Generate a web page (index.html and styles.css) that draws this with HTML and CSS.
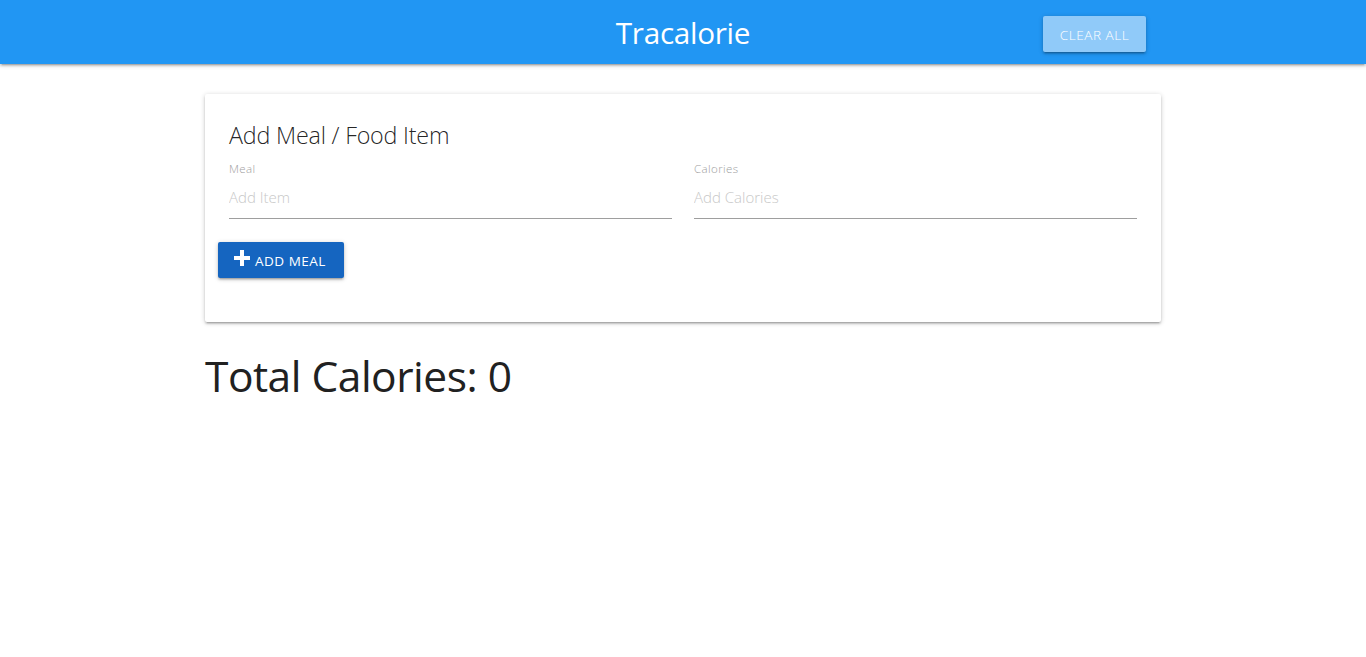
FILE: index.html
```html
<!DOCTYPE html>
<html>
<head>
<meta charset="utf-8">
<title>Tracalorie</title>
<link rel="stylesheet" href="styles.css">
</head>
<body>
<nav class="nav">
  <div class="nav-inner">
    <span class="brand">Tracalorie</span>
    <button class="btn btn-clear">CLEAR ALL</button>
  </div>
</nav>
<main class="container">
  <section class="card">
    <div class="card-content">
      <span class="card-title">Add Meal / Food Item</span>
      <form class="form">
        <div class="row">
          <div class="input-field">
            <label class="label">Meal</label>
            <input class="input" type="text" placeholder="Add Item">
          </div>
          <div class="input-field">
            <label class="label">Calories</label>
            <input class="input" type="text" placeholder="Add Calories">
          </div>
        </div>
        <button type="button" class="btn btn-add">
          <svg class="plus" viewBox="0 0 16 16" width="16" height="16"><path d="M6 0h4v6h6v4h-6v6H6v-6H0V6h6z" fill="#fff"/></svg>
          <span>ADD MEAL</span>
        </button>
      </form>
    </div>
  </section>
  <h3 class="total">Total Calories: <span>0</span></h3>
</main>
</body>
</html>
```
FILE: styles.css
```css
* { box-sizing: border-box; }
html, body { margin: 0; padding: 0; background: #fff; }
body { font-family: "Open Sans", "Noto Sans", sans-serif; color: rgba(0,0,0,0.87); }

.nav {
  height: 64px;
  background: #2196f3;
  box-shadow: 0 2px 2px 0 rgba(0,0,0,.14), 0 3px 1px -2px rgba(0,0,0,.12), 0 1px 5px 0 rgba(0,0,0,.2);
}
.nav-inner {
  position: relative;
  width: 956px;
  margin: 0 auto;
  height: 64px;
  display: flex;
  align-items: center;
  justify-content: flex-end;
  padding-right: 15px;
}
.brand {
  position: absolute;
  left: 50%;
  top: 50%;
  transform: translate(-50%, -48%);
  color: #fff;
  font-size: 29.7px;
  font-weight: 400;
  letter-spacing: -0.3px;
}
.btn {
  border: none;
  border-radius: 2px;
  height: 36px;
  color: #fff;
  font-family: inherit;
  font-size: 13px;
  letter-spacing: .5px;
  box-shadow: 0 2px 2px 0 rgba(0,0,0,.14), 0 3px 1px -2px rgba(0,0,0,.12), 0 1px 5px 0 rgba(0,0,0,.2);
  display: inline-flex;
  align-items: center;
  cursor: pointer;
}
.btn-clear {
  background: #90caf9;
  width: 103px;
  justify-content: center;
  font-weight: 300;
  font-size: 13.6px;
  margin-top: 4px;
}

.container { width: 956px; margin: 0 auto; padding-top: 30px; }
.card {
  background: #fff;
  border-radius: 2px;
  box-shadow: 0 2px 2px 0 rgba(0,0,0,.14), 0 3px 1px -2px rgba(0,0,0,.12), 0 1px 5px 0 rgba(0,0,0,.2);
  height: 228px;
}
.card-content { padding: 25px 24px 24px; }
.card-title {
  display: block;
  font-size: 23.3px;
  font-weight: 300;
  line-height: 32px;
  color: rgba(0,0,0,0.87);
  letter-spacing: -0.2px;
}
.row { display: flex; gap: 22px; margin-top: 11px; }
.input-field { flex: 1; display: flex; flex-direction: column; }
.label {
  font-size: 11.5px;
  color: #9e9e9e;
  font-weight: 300;
  line-height: 14px;
  letter-spacing: .4px;
}
.input {
  border: none;
  border-bottom: 1px solid #9e9e9e;
  height: 43px;
  padding: 0;
  font-family: inherit;
  font-size: 15px;
  font-weight: 300;
  outline: none;
  background: transparent;
}
.input::placeholder { color: #c8c8c8; font-weight: 300; }

.btn-add {
  margin-top: 23px;
  margin-left: -11px;
  background: #1565c0;
  width: 126px;
  padding: 2px 0 0 16px;
  gap: 5px;
  font-size: 13.5px;
  font-weight: 400;
}
.plus { display: block; margin-top: -6px; }

.total {
  margin: 24px 0 0;
  font-size: 42.5px;
  font-weight: 400;
  line-height: 60px;
  color: #212121;
  letter-spacing: -0.5px;
}
```
